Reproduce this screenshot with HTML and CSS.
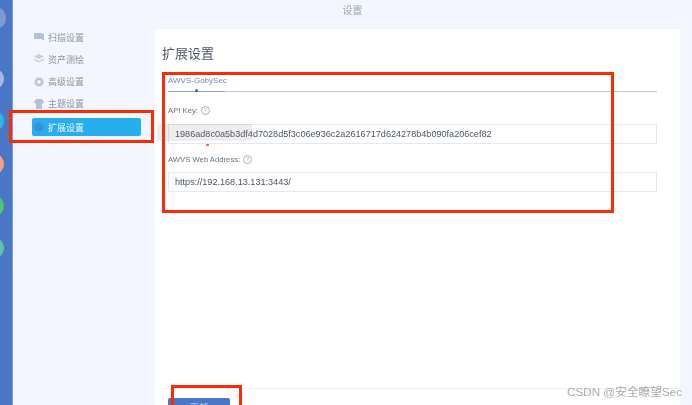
FILE: index.html
```html
<!DOCTYPE html>
<html lang="zh">
<head>
<meta charset="utf-8">
<title>设置</title>
<link rel="stylesheet" href="styles.css">
</head>
<body>
<div class="app">
  <aside class="rail">
    <span class="dot dot-a"></span>
    <span class="dot dot-b"></span>
    <span class="dot dot-c"></span>
    <span class="dot dot-d"></span>
    <span class="dot dot-e"></span>
    <span class="dot dot-f"></span>
  </aside>
  <div class="main">
    <header class="title">设置</header>
    <div class="body-row">
      <nav class="side">
        <a class="item">
          <svg class="ico" viewBox="0 0 10 10"><path d="M0 1h8v1h2v6H8V7H0z" fill="#b4bfdc"/></svg>扫描设置
        </a>
        <a class="item">
          <svg class="ico" viewBox="0 0 10 10"><path d="M5 0l5 2.500L5 5 0 2.500zM0 4.500L5 7l5-2.500V6L5 8.500 0 6z" fill="#c3cde4"/></svg>资产测绘
        </a>
        <a class="item">
          <svg class="ico" viewBox="0 0 10 10"><circle cx="5" cy="5" r="3" fill="none" stroke="#b4bfdc" stroke-width="2"/><circle cx="5" cy="5" r="4.700" fill="none" stroke="#c9d2e8" stroke-width="1" stroke-dasharray="1.500 1"/></svg>高级设置
        </a>
        <a class="item">
          <svg class="ico" viewBox="0 0 10 10"><path d="M1 1l2-1h4l2 1 1 3-2 .500V10H2V4.500L0 4z" fill="#b4bfdc"/></svg>主题设置
        </a>
        <a class="item active">
          <svg class="ico" viewBox="0 0 10 10"><circle cx="5" cy="5" r="4.500" fill="#3f8fd6"/></svg>扩展设置
        </a>
      </nav>
      <section class="panel">
        <h1 class="heading">扩展设置</h1>
        <div class="tabs"><span class="tab">AWVS-GobySec</span></div>
        <div class="field">
          <label class="label">API Key: <span class="help">?</span></label>
          <div class="input">1986ad8c0a5b3df4d7028d5f3c06e936c2a2616717d624278b4b090fa206cef82</div>
        </div>
        <div class="field second">
          <label class="label">AWVS Web Address: <span class="help">?</span></label>
          <div class="input">https://192.168.13.131:3443/</div>
        </div>
        <footer class="foot"><button class="save">更新</button></footer>
      </section>
    </div>
  </div>
</div>
<div class="ghost"></div>
<div class="tick"></div>
<div class="mark mark-side"></div>
<div class="mark mark-form"></div>
<div class="mark mark-btn"></div>
<div class="wm">CSDN @安全瞭望Sec</div>
</body>
</html>
```
FILE: styles.css
```css
* { box-sizing: border-box; }
html, body { margin: 0; height: 100%; overflow: hidden; }
body {
  position: relative;
  background: #f3f6fe;
  font-family: "Liberation Sans", "Noto Sans CJK SC", sans-serif;
  color: #6b7488;
}
.app { display: flex; height: 405px; overflow: hidden; filter: blur(0.35px); }
.rail {
  position: relative;
  width: 13px;
  flex: none;
  background: #4a76c6;
  border-right: 1px solid #7d9bd6;
  overflow: hidden;
}
.dot { position: absolute; left: -10px; width: 14px; height: 18px; border-radius: 50%; }
.dot-a { top: 8px; left: -9px; width: 15px; height: 20px; background: #7c9ad6; }
.dot-b { top: 70px; background: #a5b8e2; }
.dot-c { top: 112px; background: #35b4e0; }
.dot-d { top: 155px; background: #f0a182; }
.dot-e { top: 197px; background: #52c46f; }
.dot-f { top: 239px; background: #5cc5a8; }
.main { flex: 1; display: flex; flex-direction: column; min-width: 0; }
.title {
  height: 29px;
  flex: none;
  text-align: center;
  padding: 5px 0 0 0;
  font-size: 10px;
  line-height: 12px;
  color: #9aa5bd;
}
.body-row { flex: 1; display: flex; min-height: 0; padding-right: 12px; }
.side {
  width: 142px;
  flex: none;
  display: flex;
  flex-direction: column;
  padding: 0 0 0 19px;
  gap: 6.25px;
}
.item {
  height: 16px;
  flex: none;
  display: flex;
  align-items: center;
  gap: 4px;
  padding-left: 2px;
  width: 109px;
  font-size: 9px;
  color: #8b94a8;
  border-radius: 2px;
}
.item.active { height: 18px; background: #27aeee; color: #eef8ff; }
.ico { width: 10px; height: 10px; flex: none; }
.panel {
  flex: 1;
  min-width: 0;
  background: #fff;
  padding: 17px 23px 0 7px;
  display: flex;
  flex-direction: column;
}
.heading {
  margin: 0 0 13px;
  font-size: 13px;
  line-height: 16px;
  font-weight: 400;
  color: #4d5666;
}
.tabs {
  display: flex;
  margin-left: 6px;
  height: 17px;
  border-bottom: 1px solid #bcc6dc;
}
.tab {
  position: relative;
  height: 17px;
  width: 57px;
  flex: none;
  font-size: 8px;
  line-height: 11px;
  color: #6f88c2;
  border-bottom: 1px solid #8fa3cf;
  white-space: nowrap;
}
.tab::after {
  content: "";
  position: absolute;
  left: 27px;
  bottom: -1px;
  width: 3px;
  height: 3px;
  border-radius: 50% 50% 0 0;
  background: #3f68b5;
}
.field { margin-left: 6px; margin-top: 12px; }
.field.second { margin-top: 9px; }
.label {
  display: flex;
  align-items: center;
  gap: 3px;
  height: 12px;
  margin-bottom: 8px;
  font-size: 7.7px;
  color: #6a7283;
}
.second .label { margin-bottom: 7px; }
.help {
  width: 9px;
  height: 9px;
  border: 1px solid #a9b4c8;
  border-radius: 50%;
  font-size: 6px;
  line-height: 7px;
  text-align: center;
  color: #a9b4c8;
}
.input {
  height: 20px;
  border: 1px solid #e3e8f1;
  padding-left: 6px;
  font-size: 9.1px;
  line-height: 18px;
  color: #4c5467;
  white-space: nowrap;
  overflow: hidden;
}
.foot {
  margin-top: auto;
  margin-right: -23px;
  height: 17px;
  flex: none;
  border-top: 1px solid #eef0f8;
  padding: 9px 0 0 6px;
}
.save {
  display: block;
  width: 62px;
  height: 16px;
  padding: 4px 0 0;
  border: 0;
  border-radius: 2px;
  background: #4a76c6;
  color: #dbe5f6;
  font: 9px/12px "Liberation Sans", "Noto Sans CJK SC", sans-serif;
}
.ghost {
  position: absolute;
  left: 157px;
  top: 124px;
  width: 95px;
  height: 17px;
  border-radius: 2px;
  background: rgba(120, 120, 120, .13);
}
.tick { position: absolute; left: 206px; top: 144px; width: 3px; height: 2px; background: #f26a55; }
.mark { position: absolute; border: 3px solid #f92c05; }
.mark-side { left: 9px; top: 110px; width: 145px; height: 33px; }
.mark-form { left: 162px; top: 72px; width: 452px; height: 141px; }
.mark-btn { left: 171px; top: 385px; width: 71px; height: 40px; }
.wm {
  position: absolute;
  left: 567px;
  top: 385px;
  font-size: 11.7px;
  line-height: 14px;
  color: #a8aaae;
  white-space: nowrap;
}
```
